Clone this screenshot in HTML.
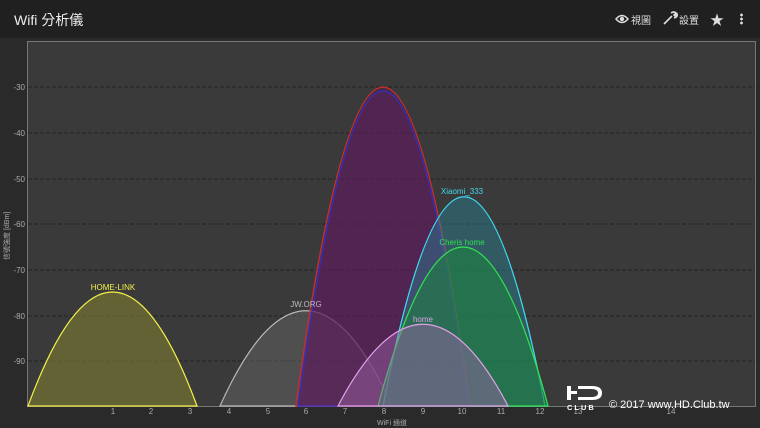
<!DOCTYPE html>
<html><head><meta charset="utf-8"><style>
body{margin:0;width:760px;height:428px;background:#2a2a2a;overflow:hidden;font-family:"Liberation Sans","Noto Sans CJK TC",sans-serif;position:relative}
.hdr{position:absolute;left:0;top:0;width:760px;height:38px;background:#202020;color:#eee}
.t{position:absolute;left:14px;top:10px;font-size:14px}
.ic{position:absolute;top:12px;font-size:10px;color:#ddd}
</style></head><body>
<div class="hdr"><div class="t">Wifi 分析儀</div>
<svg style="position:absolute;left:615px;top:13px" width="14" height="12" viewBox="0 0 14 12"><path d="M1 6Q7 -1 13 6Q7 13 1 6Z" fill="none" stroke="#ddd" stroke-width="1.5"/><circle cx="7" cy="6" r="2.2" fill="#ddd"/></svg>
<div class="ic" style="left:631px">視圖</div>
<svg style="position:absolute;left:662px;top:11px" width="16" height="14" viewBox="0 0 16 14"><path d="M2 13L10 5M9 2Q12 0 14 2L12 4L13 5L15 3Q16 6 12 7" fill="none" stroke="#ddd" stroke-width="1.6"/></svg>
<div class="ic" style="left:679px">設置</div>
<div style="position:absolute;left:710px;top:10px;font-size:14px;color:#ddd">★</div>
<div style="position:absolute;left:740px;top:13px;width:3px;height:12px;background:radial-gradient(circle,#ddd 1.3px,transparent 1.5px) 0 0/3px 4px"></div>
</div>
<svg style="position:absolute;left:0;top:0" width="760" height="428">
<rect x="27.5" y="41.5" width="728" height="365" fill="#3a3a3a" stroke="#777"/>
<g stroke="#222" stroke-dasharray="4 2" stroke-width="1">
<line x1="28" y1="87" x2="755" y2="87"/><line x1="28" y1="133" x2="755" y2="133"/><line x1="28" y1="179" x2="755" y2="179"/><line x1="28" y1="224" x2="755" y2="224"/><line x1="28" y1="270" x2="755" y2="270"/><line x1="28" y1="316" x2="755" y2="316"/><line x1="28" y1="361" x2="755" y2="361"/>
</g>
<g font-size="8" fill="#aaa" text-anchor="end">
<text x="25" y="90">-30</text><text x="25" y="136">-40</text><text x="25" y="182">-50</text><text x="25" y="227">-60</text><text x="25" y="273">-70</text><text x="25" y="319">-80</text><text x="25" y="364">-90</text>
</g>
<text transform="translate(9,260) rotate(-90)" font-size="7" fill="#aaa">信號強度 [dBm]</text>
<g font-size="8" fill="#aaa" text-anchor="middle">
<text x="113" y="414">1</text><text x="151" y="414">2</text><text x="190" y="414">3</text><text x="229" y="414">4</text><text x="268" y="414">5</text><text x="306" y="414">6</text><text x="345" y="414">7</text><text x="384" y="414">8</text><text x="423" y="414">9</text><text x="462" y="414">10</text><text x="501" y="414">11</text><text x="540" y="414">12</text><text x="578" y="414">13</text><text x="671" y="414">14</text>
<text x="392" y="425" font-size="7">WiFi 通道</text>
</g>
<path d="M28 406C84 254 141 254 197 406Z" fill="rgba(120,120,50,0.65)" stroke="#f4f04a" stroke-width="1.2"/>
<path d="M220 406C277 279 335 279 392 406Z" fill="rgba(100,100,100,0.5)" stroke="#b8b8b8" stroke-width="1.2"/>
<path d="M296 406C354 -19 412 -19 470 406Z" fill="rgba(90,25,70,0.45)" stroke="#c03030" stroke-width="1.5"/>
<path d="M298 406C355 -14 411 -14 468 406Z" fill="rgba(90,30,100,0.5)" stroke="#3030d0" stroke-width="1.2"/>
<path d="M383 406C437 127 491 127 545 406Z" fill="rgba(40,130,150,0.45)" stroke="#40d8ee" stroke-width="1.3"/>
<path d="M378 406C435 194 491 194 548 406Z" fill="rgba(30,130,65,0.6)" stroke="#30e050" stroke-width="1.3"/>
<path d="M338 406C395 297 451 297 508 406Z" fill="rgba(160,100,170,0.45)" stroke="#e0a0e8" stroke-width="1.2"/>
<g font-size="8" text-anchor="middle">
<text x="113" y="290" fill="#f4f04a">HOME-LINK</text>
<text x="306" y="307" fill="#bbb">JW.ORG</text>
<text x="462" y="194" fill="#40d8ee">Xiaomi_333</text>
<text x="462" y="245" fill="#30e050">Cheris home</text>
<text x="423" y="322" fill="#e0a0e8">home</text>
</g>
<g fill="#fff">
<rect x="567" y="386" width="4" height="14"/><rect x="567" y="391" width="10" height="3"/><path d="M578 386h14q10 0 10 7q0 7-10 7h-14v-3h13q7 0 7-4t-7-4h-13z"/>
</g>
<text x="567" y="410" font-size="7.5" fill="#fff" font-weight="bold" letter-spacing="2">CLUB</text>
<text x="609" y="408" font-size="11" fill="#fff">© 2017 www.HD.Club.tw</text>
</svg>
</body></html>
